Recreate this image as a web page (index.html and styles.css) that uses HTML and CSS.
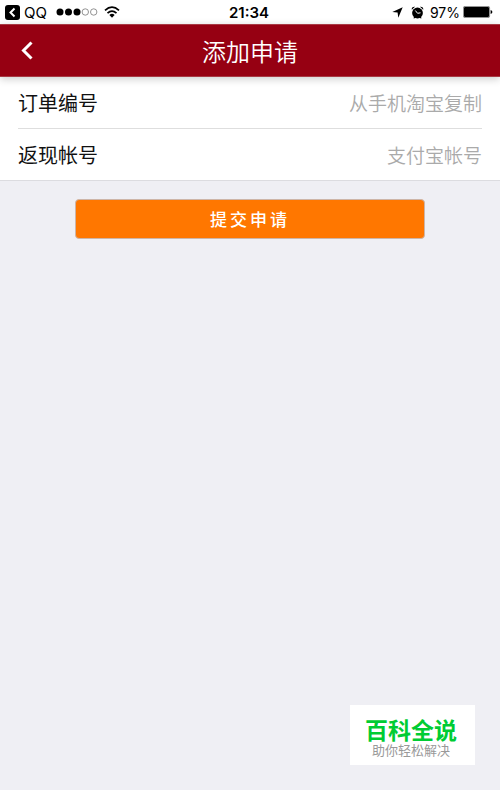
FILE: index.html
```html
<!DOCTYPE html>
<html lang="zh-CN">
<head>
<meta charset="utf-8">
<meta name="viewport" content="width=device-width, initial-scale=1">
<title>添加申请</title>
<link rel="stylesheet" href="styles.css">
</head>
<body>
<div class="status">
  <div class="status-side">
    <svg class="back-app" width="15" height="15" viewBox="0 0 15 15" aria-hidden="true"><rect width="15" height="15" rx="3"/><path d="M9.5 3.5 5.5 7.5l4 4" fill="none" stroke="#fff" stroke-width="2"/></svg>
    <span class="app">QQ</span>
    <svg class="signal" width="42" height="8" viewBox="0 0 42 8" aria-hidden="true"><circle cx="4" cy="4" r="3.5"/><circle cx="12.5" cy="4" r="3.5"/><circle cx="21" cy="4" r="3.5"/><g fill="none" stroke="#777" stroke-width=".8"><circle cx="29.3" cy="4" r="3.2"/><circle cx="37.7" cy="4" r="3.2"/></g></svg>
    <svg class="wifi" width="16" height="12" viewBox="0 0 16 12" aria-hidden="true"><g fill="none" stroke="#000" stroke-width="1.7"><path d="M1 4.4Q8-2 15 4.4"/><path d="M3.5 7.200q4.500-4 9 0"/></g><path d="M5.400 8.900q2.600-2.100 5.200 0L8 11.700Z"/></svg>
  </div>
  <time class="clock">21:34</time>
  <div class="status-side status-end">
    <svg class="location" width="11" height="11" viewBox="0 0 11 11" aria-hidden="true"><path d="M10.700.3 6.300 10.700 5.600 5.500.3 4.900Z"/></svg>
    <svg class="alarm" width="13" height="13" viewBox="0 0 13 13" aria-hidden="true"><circle cx="6.500" cy="7" r="5.400"/><path d="M.8 3.700A2.500 2.500 0 0 1 4 .8ZM12.200 3.700A2.500 2.500 0 0 0 9 .8ZM2.300 12.300l1.200-2 1.300.8-.8 1.200ZM10.700 12.300l-1.200-2-1.300.8.8 1.200Z"/><path d="M4.300 4.500l2.300 2.800L9.500 6.800" fill="none" stroke="#fff"/></svg>
    <span class="percent">97%</span>
    <svg class="battery" width="30" height="12" viewBox="0 0 30 12" aria-hidden="true"><rect x=".4" y=".4" width="26.200" height="11.200" rx="1.500" fill="none" stroke="#555" stroke-width=".7"/><rect x="1" y="1" width="25" height="10" rx="1"/><path d="M27.600 4q1.800.3 1.800 2t-1.800 2Z"/></svg>
  </div>
</div>
<header class="bar">
  <button class="back" type="button" aria-label="返回"><svg width="14" height="20" viewBox="0 0 14 20" aria-hidden="true"><path d="M11.500 1.500 3.500 9.500l8 8" fill="none" stroke="#fff" stroke-width="3"/></svg></button>
  <h1 class="title">添加申请</h1>
</header>
<form class="form">
  <div class="fields">
    <div class="field"><label for="order">订单编号</label><input id="order" type="text" placeholder="从手机淘宝复制"></div>
    <div class="field"><label for="account">返现帐号</label><input id="account" type="text" placeholder="支付宝帐号"></div>
  </div>
  <button class="submit" type="submit">提交申请</button>
</form>
<aside class="badge">
  <strong class="badge-name">百科全说</strong>
  <span class="badge-note">助你轻松解决</span>
</aside>
</body>
</html>
```
FILE: styles.css
```css
* { box-sizing: border-box; }
body {
  margin: 0;
  min-height: 100vh;
  background: #efeff4;
  color: #111;
  font-family: "Noto Sans CJK SC", sans-serif;
}
.status {
  display: grid;
  grid-template-columns: 1fr auto 1fr;
  align-items: center;
  height: 24px;
  padding: 0 7px 0 5px;
  background: #fff;
  color: #000;
  font-family: Inter, sans-serif;
  font-size: 14px;
}
.status-side { display: flex; align-items: center; }
.status-end { justify-content: flex-end; }
.app { margin: 0 9px 0 4px; font-size: 15px; }
.wifi { margin-left: 6px; }
.clock { font-size: 15px; font-weight: 600; }
.location { margin-right: 8px; }
.alarm { margin-right: 6px; }
.percent { margin-right: 3px; }
.bar {
  position: relative;
  display: grid;
  grid-template-columns: 54px 1fr 54px;
  align-items: center;
  height: 53px;
  background: #960012;
  border-top: 1px solid #a83a44;
  border-bottom: 1px solid #a83a44;
  box-shadow: 0 2px 8px rgba(0, 0, 0, 0.2);
  color: #fff;
}
.back {
  display: flex;
  justify-content: center;
  padding: 0;
  border: 0;
  background: none;
}
.title {
  margin: 0;
  font-size: 24px;
  line-height: 36px;
  font-weight: 350;
  text-align: center;
}
.fields {
  padding: 0 18px;
  background: #fff;
  border-bottom: 1px solid #dcdce0;
}
.field {
  display: flex;
  align-items: center;
  height: 51px;
  font-size: 20px;
  line-height: 32px;
}
.field + .field { border-top: 1px solid #dedede; height: 52px; }
.field input {
  flex: 1;
  min-width: 0;
  height: 30px;
  padding: 0;
  border: 0;
  outline: 0;
  background: none;
  color: #111;
  font: inherit;
  font-size: 19px;
  text-align: right;
}
.field input::placeholder { color: #aaa; opacity: 1; font-weight: 350; }
.submit {
  display: block;
  width: 70%;
  height: 40px;
  margin: 18px auto 0;
  padding: 0 0 2px;
  border: 1px solid #cdb5a8;
  border-radius: 4px;
  background: #ff7700;
  color: #fff;
  font: 500 17px "Noto Sans CJK SC", sans-serif;
  letter-spacing: 3px;
}
.badge {
  position: fixed;
  right: 25px;
  bottom: 25px;
  display: flex;
  flex-direction: column;
  align-items: center;
  width: 125px;
  height: 60px;
  padding: 14px 3px 0 0;
  background: #fff;
  font-family: "Liberation Sans", "Noto Sans CJK SC", sans-serif;
}
.badge-name {
  color: #00cc33;
  font-size: 23px;
  line-height: 24px;
  font-weight: 700;
}
.badge-note {
  color: #999;
  font-size: 13px;
  line-height: 16px;
}
```
